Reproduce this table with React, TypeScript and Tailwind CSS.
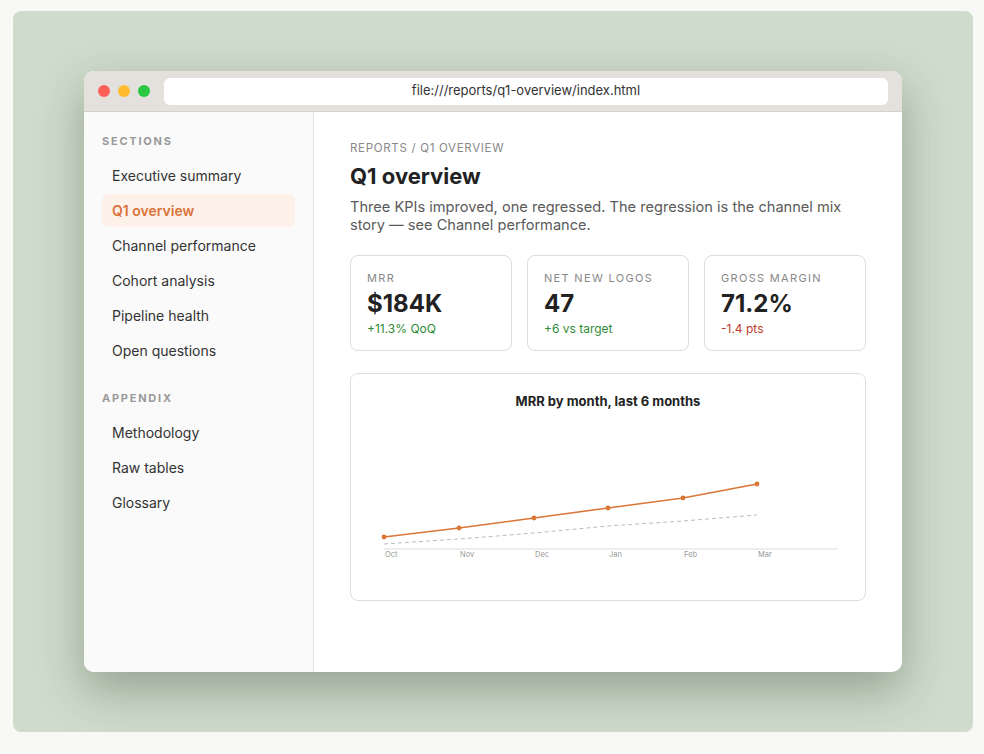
const sections = ["Executive summary", "Q1 overview", "Channel performance", "Cohort analysis", "Pipeline health", "Open questions"];
const appendix = ["Methodology", "Raw tables", "Glossary"];

const kpis = [
  { label: "MRR", value: "$184K", delta: "+11.3% QoQ", good: true },
  { label: "Net new logos", value: "47", delta: "+6 vs target", good: true },
  { label: "Gross margin", value: "71.2%", delta: "-1.4 pts", good: false },
];

const months = ["Oct", "Nov", "Dec", "Jan", "Feb", "Mar"];
const xs = [33, 108, 183, 257, 332, 406];
const mrr = [121, 112, 102, 92, 82, 68];
const target = [128, 123, 117, 110, 105, 99];

function NavItem({ label, active }: { label: string; active?: boolean }) {
  return (
    <div
      className={
        active
          ? "h-[33px] flex items-center px-[10px] rounded-md bg-[#fdf1ea] text-[#d9733a] font-semibold"
          : "h-[33px] flex items-center px-[10px] rounded-md text-[#333]"
      }
    >
      {label}
    </div>
  );
}

function Chart() {
  const line = xs.map((x, i) => `${x},${mrr[i]}`).join(" ");
  const dash = xs.map((x, i) => `${x},${target[i]}`).join(" ");
  return (
    <svg width="514" height="170" viewBox="0 0 514 170" className="block">
      <line x1="33" y1="133" x2="487" y2="133" stroke="#eeeeee" strokeWidth="2" />
      <polyline points={dash} fill="none" stroke="#bbbbbb" strokeWidth="1" strokeDasharray="4 3" />
      <polyline points={line} fill="none" stroke="#db7637" strokeWidth="1.6" strokeLinejoin="round" />
      {xs.map((x, i) => (
        <circle key={i} cx={x} cy={mrr[i]} r="2.4" fill="#db7637" />
      ))}
      {months.map((m, i) => (
        <text key={m} x={xs[i] + 1} y="141" fontSize="7.5" fill="#999" fontFamily="Inter, sans-serif">
          {m}
        </text>
      ))}
    </svg>
  );
}

export default function App() {
  return (
    <div className="w-[984px] h-[754px] bg-[#f8f8f6] pt-[11px] pl-[13px]" style={{ fontFamily: "Inter, 'Noto Sans', sans-serif" }}>
      <div className="w-[960px] h-[721px] rounded-lg bg-[#cfdbcb] pt-[60px] pl-[71px]">
        <div className="w-[818px] h-[601px] rounded-[10px] bg-white overflow-hidden flex flex-col shadow-[0_18px_45px_rgba(40,60,40,0.35)]">
          {/* Title bar */}
          <div className="h-[41px] bg-[#e4e0db] border-b border-[#d4d0cb] flex items-center pl-[14px] pr-[14px] gap-[8px] shrink-0">
            <span className="w-[12px] h-[12px] rounded-full bg-[#fe5f57]" />
            <span className="w-[12px] h-[12px] rounded-full bg-[#febc2e]" />
            <span className="w-[12px] h-[12px] rounded-full bg-[#28c840]" />
            <div className="ml-[6px] flex-1 h-[27px] rounded-md bg-white flex items-center justify-center text-[13px] text-[#333]">
              file:///reports/q1-overview/index.html
            </div>
          </div>

          <div className="flex flex-1 min-h-0">
            {/* Sidebar */}
            <div className="w-[230px] shrink-0 bg-[#fafafa] border-r border-[#e2e2e2] px-[18px] pt-[22px] text-[14px]">
              <div className="text-[11px] font-bold tracking-[0.16em] text-[#999] h-[14px] leading-[14px]">SECTIONS</div>
              <div className="mt-[11px] flex flex-col gap-[2px]">
                {sections.map((s) => (
                  <NavItem key={s} label={s} active={s === "Q1 overview"} />
                ))}
              </div>
              <div className="mt-[24px] text-[11px] font-bold tracking-[0.16em] text-[#999] h-[14px] leading-[14px]">APPENDIX</div>
              <div className="mt-[11px] flex flex-col gap-[2px]">
                {appendix.map((s) => (
                  <NavItem key={s} label={s} />
                ))}
              </div>
            </div>

            {/* Main */}
            <div className="flex-1 px-9 pt-[29px]">
              <div className="text-[11.5px] tracking-[0.06em] text-[#888] leading-[14px]">REPORTS / Q1 OVERVIEW</div>
              <h1 className="mt-[7px] text-[22px] font-bold text-[#222] leading-[28px]">Q1 overview</h1>
              <p className="mt-[8px] text-[14.6px] leading-[18px] text-[#5a5a5a]">
                Three KPIs improved, one regressed. The regression is the channel mix story — see Channel performance.
              </p>

              <div className="mt-[21px] grid grid-cols-3 gap-[15px]">
                {kpis.map((k) => (
                  <div key={k.label} className="h-[96px] rounded-lg border border-[#dddddd] px-[16px] pt-[15px]">
                    <div className="text-[11px] tracking-[0.12em] text-[#888] uppercase leading-[14px]">{k.label}</div>
                    <div className="mt-[5px] text-[24px] font-bold text-[#222] leading-[28px]">{k.value}</div>
                    <div className={k.good ? "mt-[4px] text-[12px] text-[#2e8a37] leading-[14px]" : "mt-[4px] text-[12px] text-[#c0392b] leading-[14px]"}>
                      {k.delta}
                    </div>
                  </div>
                ))}
              </div>

              <div className="mt-[22px] h-[228px] rounded-lg border border-[#dddddd] pt-[19px]">
                <div className="text-center text-[13px] font-bold text-[#222] leading-[16px]">MRR by month, last 6 months</div>
                <div className="mt-[7px]">
                  <Chart />
                </div>
              </div>
            </div>
          </div>
        </div>
      </div>
    </div>
  );
}
